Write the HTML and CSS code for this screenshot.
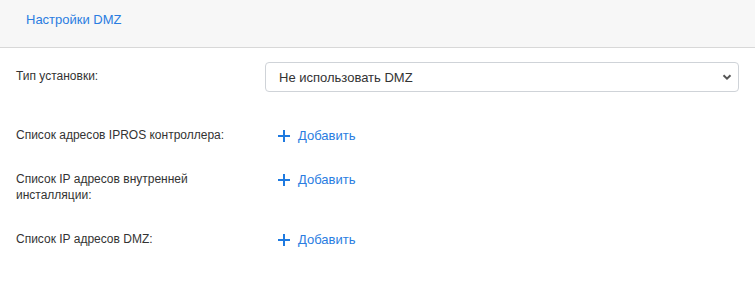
FILE: index.html
```html
<!DOCTYPE html>
<html lang="ru">
  <head>
    <meta charset="UTF-8" />
    <title>Настройки DMZ</title>
    <link rel="stylesheet" href="styles.css">
  </head>
  <body>
    <div class="panel-header">Настройки DMZ</div>
    <div class="form">
      <div class="row row-select">
        <label class="label" for="dmzType">Тип установки:</label>
        <div class="field">
          <div class="select-wrap">
            <select id="dmzType" class="select">
              <option>Не использовать DMZ</option>
            </select>
            <svg class="chevron" width="10" height="10" viewBox="0 0 10 10"><path d="M1.5 3.2 5 6.6 8.5 3.2" fill="none" stroke="#555" stroke-width="2"/></svg>
          </div>
        </div>
      </div>
      <div class="row row-ipros">
        <div class="label">Список адресов IPROS контроллера:</div>
        <div class="field">
          <button class="add-btn" type="button">
            <svg width="12" height="12" viewBox="0 0 12 12"><path d="M6 0v12M0 6h12" stroke="#1f7ae0" stroke-width="2"/></svg>
            Добавить
          </button>
        </div>
      </div>
      <div class="row row-internal">
        <div class="label">Список IP адресов внутренней инсталляции:</div>
        <div class="field">
          <button class="add-btn" type="button">
            <svg width="12" height="12" viewBox="0 0 12 12"><path d="M6 0v12M0 6h12" stroke="#1f7ae0" stroke-width="2"/></svg>
            Добавить
          </button>
        </div>
      </div>
      <div class="row">
        <div class="label">Список IP адресов DMZ:</div>
        <div class="field">
          <button class="add-btn" type="button">
            <svg width="12" height="12" viewBox="0 0 12 12"><path d="M6 0v12M0 6h12" stroke="#1f7ae0" stroke-width="2"/></svg>
            Добавить
          </button>
        </div>
      </div>
    </div>
  </body>
</html>
```

FILE: styles.css
```css
*,
*::before,
*::after {
  box-sizing: border-box;
}

body {
  margin: 0;
  font-family: "Liberation Sans", Arial, sans-serif;
  color: #333;
  background: #fff;
}

.panel-header {
  height: 48px;
  padding: 12px 26px 0;
  background: #f7f7f7;
  border-bottom: 1px solid #d8d8d8;
  color: #2a7de1;
  font-size: 13px;
  line-height: 16px;
}

.form {
  padding: 14px 16px 0;
}

.row {
  display: grid;
  grid-template-columns: 249px 1fr;
  align-items: start;
  margin-bottom: 26px;
}

.row-select {
  align-items: center;
  margin-bottom: 35px;
}

.row-ipros {
  margin-bottom: 27px;
}

.row-internal {
  margin-bottom: 28px;
}

.label {
  font-size: 12px;
  line-height: 16px;
  color: #333;
  padding-right: 20px;
}

.row-select .label {
  padding-bottom: 2px;
}

.select-wrap {
  position: relative;
}

.select {
  display: block;
  width: 100%;
  height: 30px;
  padding: 0 30px 0 13px;
  border: 1px solid #cfd3d8;
  border-radius: 4px;
  background: #fff;
  color: #333;
  font-family: "Liberation Sans", Arial, sans-serif;
  font-size: 13px;
  appearance: none;
  -webkit-appearance: none;
}

.chevron {
  position: absolute;
  right: 7px;
  top: 10px;
  pointer-events: none;
}

.add-btn {
  display: flex;
  align-items: center;
  gap: 8px;
  margin: 1px 0 0;
  padding: 0 0 0 13px;
  border: 0;
  background: none;
  color: #2a7de1;
  font-family: "Liberation Sans", Arial, sans-serif;
  font-size: 13px;
  line-height: 16px;
  cursor: pointer;
}
```
